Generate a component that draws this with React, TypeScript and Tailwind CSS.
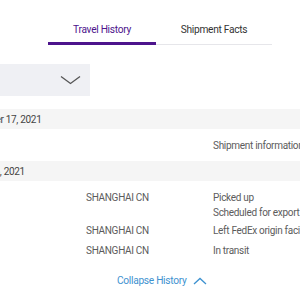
const rows = [
  { time: "5:16 PM", place: "", status: ["Shipment information sent to FedEx"] },
];

const events = [
  { time: "10:19 PM", place: "SHANGHAI CN", status: ["Picked up", "Scheduled for export"], cls: "pt-[9px] pb-[3px]" },
  { time: "8:02 PM", place: "SHANGHAI CN", status: ["Left FedEx origin facility"], cls: "pb-[5px]" },
  { time: "6:41 PM", place: "SHANGHAI CN", status: ["In transit"], cls: "" },
];

const cols = "grid grid-cols-[182px_127px_200px] ml-[-96px]";

export default function App() {
  return (
    <div className="w-[300px] h-[300px] overflow-hidden bg-white font-['Roboto',sans-serif] text-[10px] tracking-[-0.3px]">
      {/* tabs */}
      <div className="flex pl-[48px]">
        <div className="w-[108px] h-[45px] pt-[22px] flex justify-center border-b-[3px] border-[#4d148c] text-[#4d148c] text-[10.2px] leading-[16px]">
          Travel History
        </div>
        <div className="w-[116px] h-[45px] pt-[22px] flex justify-center border-b border-[#e6e6ea] text-[#333333] text-[10.2px] leading-[16px]">
          Shipment Facts
        </div>
      </div>

      {/* dropdown */}
      <div className="mt-[19px] w-[90px] h-[32px] bg-[#eff0f4] flex items-center justify-end pr-[9px]">
        <svg width="21" height="10" viewBox="0 0 21 10" fill="none" stroke="#555" strokeWidth="1.3">
          <polyline points="1,1.5 10.5,8.5 20,1.5" />
        </svg>
      </div>

      {/* history table */}
      <div className="mt-[13px] text-[#5c5c5c] leading-[15px]">
        <div className="h-[20px] bg-[#f5f5f5] flex items-center">
          <div className="ml-[-92px] whitespace-nowrap text-[#444]">Wednesday, November 17, 2021</div>
        </div>
        {rows.map((r) => (
          <div key={r.time} className={`${cols} h-[32px] items-center`}>
            <div>{r.time}</div>
            <div>{r.place}</div>
            <div className="whitespace-nowrap">{r.status[0]}</div>
          </div>
        ))}
        <div className="h-[20px] bg-[#f5f5f5] flex items-center">
          <div className="ml-[-95px] whitespace-nowrap text-[#444]">Tuesday, November 16, 2021</div>
        </div>
        {events.map((e) => (
          <div key={e.time} className={`${cols} ${e.cls}`}>
            <div>{e.time}</div>
            <div>{e.place}</div>
            <div className="whitespace-nowrap">
              {e.status.map((s) => (
                <div key={s}>{s}</div>
              ))}
            </div>
          </div>
        ))}
      </div>

      {/* collapse */}
      <div className="mt-[15px] flex items-center pl-[117px] gap-[7px] text-[#3e92d0] text-[10.2px] leading-[16px]">
        <span>Collapse History</span>
        <svg width="14" height="8" viewBox="0 0 14 8" fill="none" stroke="#3e92d0" strokeWidth="1.3">
          <polyline points="1,7 7,1.5 13,7" />
        </svg>
      </div>
    </div>
  );
}
